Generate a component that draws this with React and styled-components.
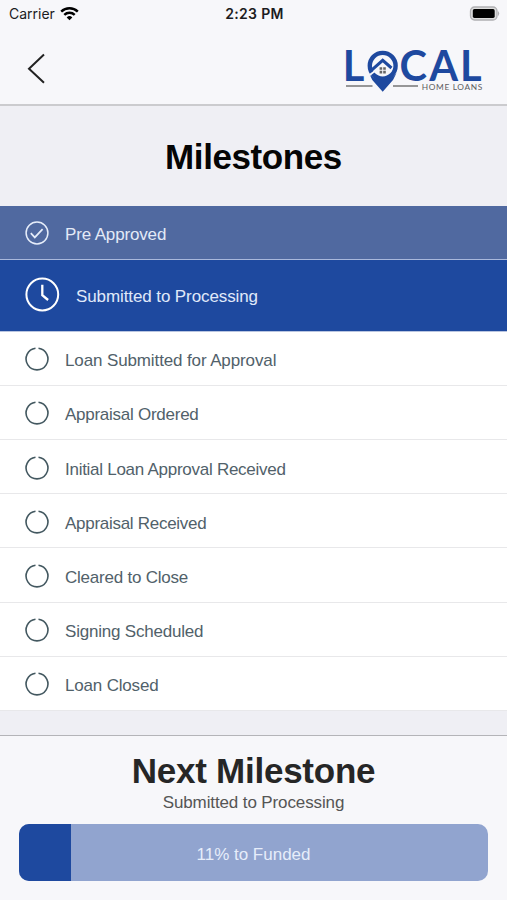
import React from 'react';
import styled, { createGlobalStyle } from 'styled-components';

const GlobalStyle = createGlobalStyle`
  * {
    box-sizing: border-box;
  }
  body {
    margin: 0;
    background: #f7f7fa;
    font-family: 'Liberation Sans', Arial, sans-serif;
  }
`;

const Screen = styled.div`
  display: flex;
  flex-direction: column;
  width: 507px;
  height: 900px;
  overflow: hidden;
  background: #efeff4;
`;

const Header = styled.header`
  height: 106px;
  background: #f7f7fa;
  border-bottom: 2px solid #cbcbce;
`;

const StatusBar = styled.div`
  display: grid;
  grid-template-columns: 1fr auto 1fr;
  align-items: center;
  height: 27px;
  padding: 0 7px 0 9px;
  font-family: Inter, sans-serif;
  font-size: 14px;
  color: #1c1c1e;
`;

const Carrier = styled.div`
  display: flex;
  align-items: center;
  gap: 5.5px;
`;

const Time = styled.div`
  font-weight: 600;
  letter-spacing: 0.35px;
`;

const Battery = styled.svg`
  justify-self: end;
`;

const NavBar = styled.nav`
  display: flex;
  justify-content: space-between;
  padding: 13px 17px 0 27px;
`;

const BackButton = styled.button`
  display: flex;
  align-items: flex-start;
  padding: 13px 0 0;
  border: 0;
  background: none;
`;

const TitleArea = styled.div`
  display: flex;
  justify-content: center;
  height: 100px;
  padding-top: 31px;
`;

const Title = styled.h1`
  margin: 0;
  font-size: 35px;
  line-height: 40px;
  color: #050505;
  letter-spacing: -0.4px;
`;

const List = styled.ul`
  margin: 0;
  padding: 0;
  list-style: none;
`;

const rowColors = {
  done: { background: '#5069a0', color: '#e3eaf7', line: '#a9b8dc' },
  current: { background: '#1e499f', color: '#e0e9fa', line: '#b9c5e0' },
  pending: { background: '#ffffff', color: '#51616a', line: '#e8e8ea' },
};

const Row = styled.li`
  display: flex;
  align-items: center;
  gap: 16px;
  height: ${({ $status }) => ($status === 'current' ? '71.4px' : '54.2px')};
  padding: ${({ $status }) => ($status === 'pending' ? '2px 25px 0' : '0 25px')};
  background: ${({ $status }) => rowColors[$status].background};
  color: ${({ $status }) => rowColors[$status].color};
  border-bottom: 1.5px solid ${({ $status }) => rowColors[$status].line};

  svg {
    flex-shrink: 0;
    margin-bottom: ${({ $status }) => ($status === 'current' ? '2px' : '0')};
  }
`;

const Label = styled.span`
  padding-top: 4px;
  font-size: 17px;
  line-height: 20px;
  letter-spacing: ${({ $spacing }) => $spacing}px;
`;

const Footer = styled.footer`
  display: flex;
  flex-direction: column;
  align-items: center;
  height: 165px;
  margin-top: auto;
  padding: 15px 19px 0;
  background: #f7f7fa;
  border-top: 1.5px solid #b4b4b8;
`;

const FooterTitle = styled(Title)`
  color: #262626;
  letter-spacing: -0.25px;
`;

const FooterText = styled.div`
  margin-top: 2px;
  font-size: 17px;
  line-height: 20px;
  letter-spacing: -0.12px;
  color: #555;
`;

const Progress = styled.div`
  display: grid;
  width: 469px;
  height: 57px;
  margin-top: 11px;
  border-radius: 10px;
  background: #91a4cf;
  overflow: hidden;
`;

const ProgressFill = styled.div`
  grid-area: 1 / 1;
  background: #1e499f;
`;

const ProgressText = styled.div`
  grid-area: 1 / 1;
  align-self: center;
  padding-top: 4px;
  text-align: center;
  font-size: 17px;
  color: #e6edfa;
`;

const milestones = [
  { name: 'Pre Approved', status: 'done', spacing: -0.15 },
  { name: 'Submitted to Processing', status: 'current', spacing: -0.1 },
  { name: 'Loan Submitted for Approval', status: 'pending', spacing: -0.12 },
  { name: 'Appraisal Ordered', status: 'pending', spacing: -0.26 },
  { name: 'Initial Loan Approval Received', status: 'pending', spacing: -0.27 },
  { name: 'Appraisal Received', status: 'pending', spacing: -0.28 },
  { name: 'Cleared to Close', status: 'pending', spacing: -0.22 },
  { name: 'Signing Scheduled', status: 'pending', spacing: -0.2 },
  { name: 'Loan Closed', status: 'pending', spacing: -0.18 },
];

const percent = 11;

const WifiIcon = () => (
  <svg width="19" height="14" viewBox="0 0 19 14" fill="none" stroke="#000" strokeWidth="2.4">
    <path d="M1.2 4.7a11.8 11.8 0 0 1 16.6 0" />
    <path d="M4.3 7.9a7.4 7.4 0 0 1 10.4 0" />
    <path d="M9.5 13.3L6.7 10.4a4 4 0 0 1 5.6 0z" fill="#000" stroke="none" />
  </svg>
);

const StatusIcon = ({ status }) => {
  if (status === 'done') {
    return (
      <svg width="24" height="24" viewBox="0 0 24 24" fill="none" stroke="#e6edfa" strokeWidth="1.5">
        <circle cx="12" cy="12" r="10.9" />
        <path d="M5.8 12.2l4 4.2 7.8-8.2" strokeWidth="1.7" />
      </svg>
    );
  }
  if (status === 'current') {
    return (
      <svg width="35" height="35" viewBox="0 0 35 35" fill="none" stroke="#fff" strokeWidth="2">
        <circle cx="17.3" cy="17.5" r="15.9" />
        <path d="M17.3 7.8v10.4l5.8 4.8" strokeWidth="2.3" />
      </svg>
    );
  }
  return (
    <svg width="24" height="24" viewBox="0 0 24 24" fill="none" stroke="#435860" strokeWidth="1.6">
      <path d="M13.5 1.2a10.9 10.9 0 1 1-3 0" />
    </svg>
  );
};

const Logo = () => (
  <svg width="150" height="60" viewBox="340 40 150 60">
    <g fill="#1e499f" fontFamily="Lato, sans-serif" fontWeight="700" fontSize="41.5">
      <text x="342.8" y="81">L</text>
      <text x="399.5" y="81">C</text>
      <text x="429.3" y="81">A</text>
      <text x="460" y="81">L</text>
    </g>
    <circle cx="382.7" cy="65.8" r="12.9" fill="none" stroke="#1e499f" strokeWidth="4.4" />
    <path d="M369.2 73.5Q374 80 382.7 79.5Q391.5 79.5 396.5 73L393 80L382.7 91.8L372.3 80Z" fill="#1e499f" />
    <path d="M366.5 77.5L375.5 70.5" stroke="#f7f7fa" strokeWidth="1.8" />
    <path d="M370.5 71.2L382.7 60.3L391.5 68" fill="none" stroke="#1e499f" strokeWidth="3" />
    <path
      d="M379.6 67.2h2.6v2.6h-2.6zM383.2 67.2h2.6v2.6h-2.6zM379.6 70.8h2.6v2.6h-2.6zM383.2 70.8h2.6v2.6h-2.6z"
      fill="#666"
    />
    <path d="M346 86h26.5M393 86h25" stroke="#777" strokeWidth="1.6" />
    <text x="421.8" y="89.5" fill="#5c5c60" fontFamily="Lato, sans-serif" fontSize="8.3" textLength="60.5">
      HOME LOANS
    </text>
  </svg>
);

const App = () => {
  return (
    <>
      <GlobalStyle />
      <Screen>
        <Header>
          <StatusBar>
            <Carrier>
              Carrier
              <WifiIcon />
            </Carrier>
            <Time>2:23 PM</Time>
            <Battery width="31" height="16" viewBox="0 0 31 16">
              <rect x="1.5" y="1" width="26.5" height="13" rx="4" fill="#ddd" stroke="#b0b0b3" strokeWidth="1.3" />
              <rect x="3.8" y="3.1" width="21.9" height="8.8" rx="1.6" fill="#000" />
              <path d="M29 5q2.4 2.6 0 5.2z" fill="#b0b0b3" />
            </Battery>
          </StatusBar>
          <NavBar>
            <BackButton aria-label="Back">
              <svg width="20" height="32" viewBox="0 0 20 32" fill="none" stroke="#222" strokeWidth="2">
                <path d="M17 1.5L2 15.7L17 29.8" />
              </svg>
            </BackButton>
            <Logo />
          </NavBar>
        </Header>
        <TitleArea>
          <Title>Milestones</Title>
        </TitleArea>
        <List>
          {milestones.map(({ name, status, spacing }) => (
            <Row key={name} $status={status}>
              <StatusIcon status={status} />
              <Label $spacing={spacing}>{name}</Label>
            </Row>
          ))}
        </List>
        <Footer>
          <FooterTitle as="h2">Next Milestone</FooterTitle>
          <FooterText>Submitted to Processing</FooterText>
          <Progress>
            <ProgressFill style={{ width: `${percent}%` }} />
            <ProgressText>{percent}% to Funded</ProgressText>
          </Progress>
        </Footer>
      </Screen>
    </>
  );
};

export default App;
